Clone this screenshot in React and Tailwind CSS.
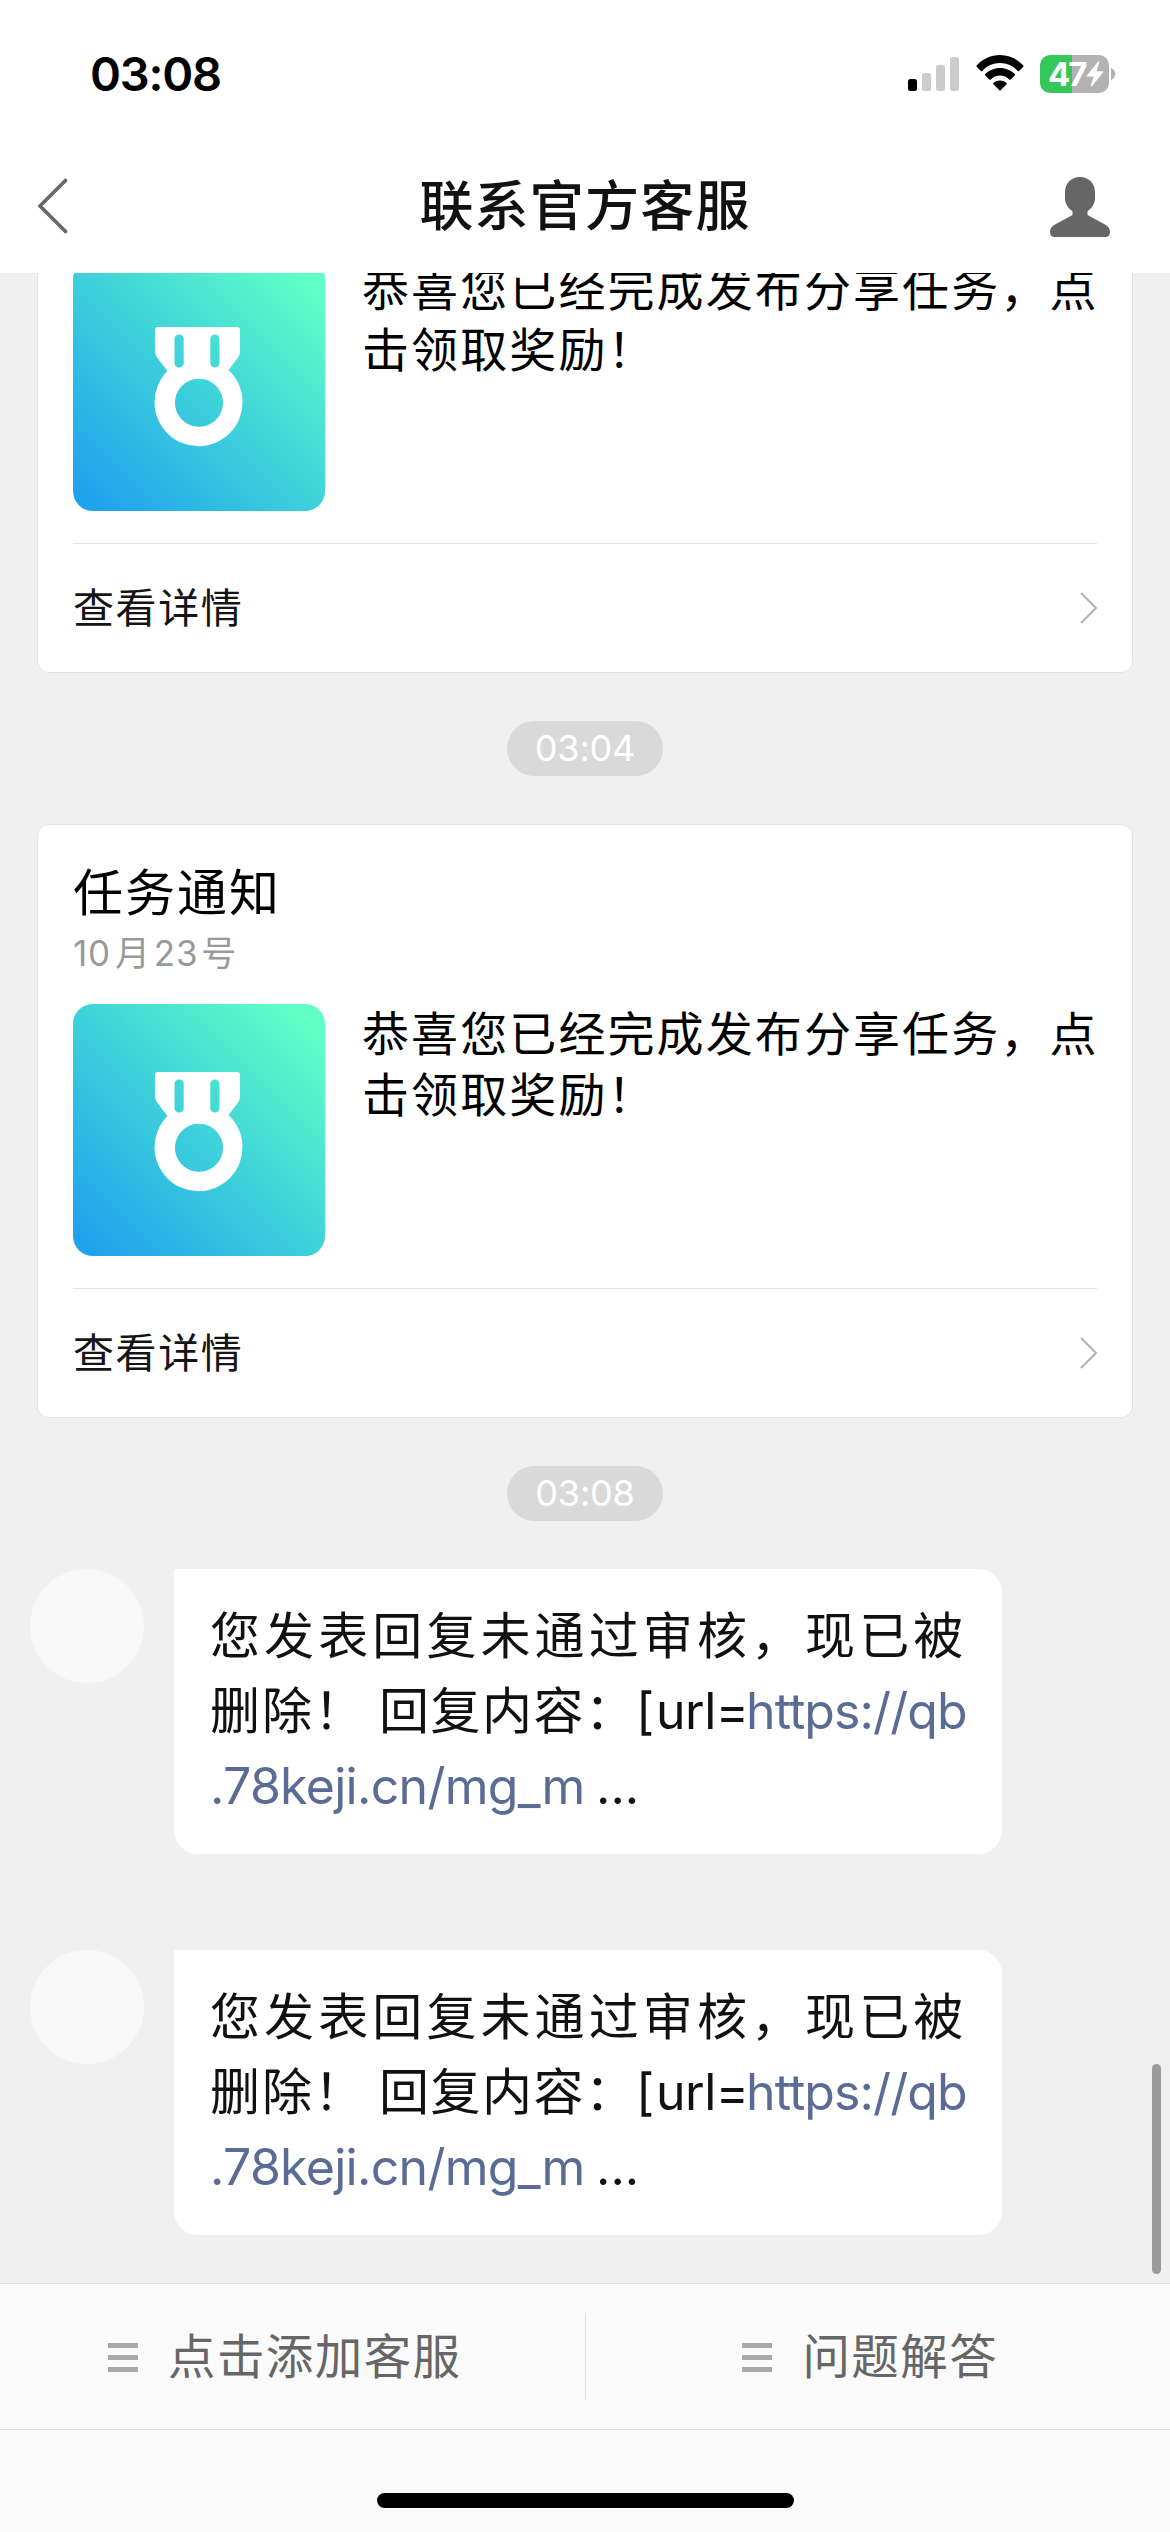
function StatusBar() {
  return (
    <div className="flex h-[147px] shrink-0 items-start bg-white pl-[90px] pr-[54px] pt-[50px]">
      <div className="h-[48px] w-[134px] whitespace-nowrap text-[47px] font-semibold leading-[48px] tracking-[-1.200px] text-black">03:08</div>
      <div className="ml-auto flex items-start pt-[5px]">
        <svg width="52" height="36" viewBox="0 0 52 36">
          <rect x="0" y="24" width="9" height="12" rx="2.5" fill="#000" />
          <rect x="14" y="18" width="9" height="18" rx="2.5" fill="#ccc" />
          <rect x="28" y="10" width="9" height="26" rx="2.5" fill="#ccc" />
          <rect x="42" y="2" width="9" height="34" rx="2.5" fill="#ccc" />
        </svg>
        <svg className="ml-[16px]" width="48" height="36" viewBox="0 0 48 36">
          <path d="M0.7 10.4C6.8 3.9 15 0 24 0s17.2 3.9 23.3 10.4a.9.9 0 0 1 0 1.3l-4.2 4.2a.9.9 0 0 1-1.3 0C37.200 11 31 8 24 8S10.800 11 6.200 15.900a.9.9 0 0 1-1.3 0L.7 11.700a.9.9 0 0 1 0-1.300z" />
          <path d="M9.200 19.100C13 15.200 18.200 12.900 24 12.900s11 2.300 14.800 6.200a.9.9 0 0 1 0 1.300l-4.200 4a.9.9 0 0 1-1.300 0C30.900 22.100 27.700 20.500 24 20.500s-6.900 1.600-9.300 3.900a.9.9 0 0 1-1.300 0l-4.200-4a.9.9 0 0 1 0-1.300z" />
          <path d="M17.400 27.900C19.200 26.400 21.500 25.500 24 25.500s4.800.9 6.600 2.400a.9.9 0 0 1 0 1.300l-6 6.100a.9.9 0 0 1-1.200 0l-6-6.100a.9.9 0 0 1 0-1.300z" />
        </svg>
        <div className="ml-[16px] flex h-[38px] w-[69px] items-center rounded-[10px] bg-[linear-gradient(to_right,#35c759_32px,#b2b2b2_32px)] pl-[8px]">
          <span className="w-[37px] whitespace-nowrap text-[33px] font-bold leading-[38px] tracking-[-2px] text-white">47</span>
          <svg className="ml-[1px]" width="18" height="26" viewBox="0 0 18 26">
            <path d="M12 .8 1 14.200c-.5.700-.3 1.300.500 1.300h6.200L4.800 24.400c-.2.900.7 1.200 1.300.500L17 11.600c.5-.7.300-1.300-.5-1.300h-6L13.300 1.300C13.500.300 12.600 0 12 .8z" fill="#fff" />
          </svg>
        </div>
        <svg className="ml-[2px] mt-[13px]" width="5" height="12" viewBox="0 0 5 12">
          <path d="M0 0c2.500.8 4.300 3.200 4.300 6S2.500 11.200 0 12z" fill="#b2b2b2" />
        </svg>
      </div>
    </div>
  );
}

function NavBar() {
  return (
    <div className="grid h-[126px] shrink-0 grid-cols-[200px_1fr_200px] bg-white">
      <svg className="ml-[36px] mt-[31px]" width="34" height="56" viewBox="0 0 34 56" fill="none" stroke="#666" strokeWidth="3.6">
        <path d="M29.500 2.500 4 28l25.500 25.500" strokeLinecap="round" />
      </svg>
      <h1 className="mt-[23px] whitespace-nowrap text-center text-[54px] font-medium leading-[74px] tracking-[1.200px] text-[#111]">联系官方客服</h1>
      <svg className="ml-[80px] mt-[30px]" width="60" height="60" viewBox="0 0 60 60" fill="#666">
        <path d="M30 0c8.800 0 15 6.500 15 15v6c0 6-3.300 10.500-7.500 13.200V38L55 47.500c3.500 2 5 4.500 5 7.500 0 3-2 5-5 5H5c-3 0-5-2-5-5 0-3 1.500-5.500 5-7.500L22.500 38v-3.800C18.300 31.500 15 27 15 21v-6C15 6.500 21.200 0 30 0z" />
      </svg>
    </div>
  );
}

function MedalTile() {
  return (
    <div className="size-[252px] shrink-0 overflow-hidden rounded-[20px] bg-[linear-gradient(45deg,#1fa2ed_5%,#3ed2da_50%,#60ffc6_92%)]">
      <svg width="252" height="252" viewBox="0 0 252 252" fill="#fff" fillRule="evenodd">
        <path d="M85 68H164a3 3 0 0 1 3 3V92q0 3-1.500 6L155.500 111A44 44 0 1 1 94.500 112L84 98.500Q82 95 82 92V71a3 3 0 0 1 3-3zM101.500 80V104a4.600 4.600 0 0 0 9.200 0V80a4.600 4.600 0 0 0-9.200 0zM137.300 80V104a4.600 4.600 0 0 0 9.200 0V80a4.600 4.600 0 0 0-9.200 0zM126 119.700a24 24 0 1 0 .01 0z" />
      </svg>
    </div>
  );
}

function CardHeader() {
  return (
    <header className="mb-[26px]">
      <h2 className="h-[70px] whitespace-nowrap text-[50px] leading-[70px] tracking-[2px] text-black">任务通知</h2>
      <p className="h-[50px] whitespace-nowrap text-[35px] leading-[50px] tracking-[0.800px] text-[#999]">
        10<span className="ml-[4px] mr-[3px]">月</span>23<span className="ml-[3px]">号</span>
      </p>
    </header>
  );
}

function TaskCard({ header }) {
  return (
    <article className="mx-[37px] flex h-[594px] shrink-0 flex-col justify-end rounded-[12px] border border-[#e3e3e3] bg-white px-[35px]">
      {header && <CardHeader />}
      <div className="flex">
        <MedalTile />
        <p className="-mt-px ml-[37px] whitespace-nowrap text-[47px] leading-[61px] tracking-[2.100px] text-black">
          恭喜您已经完成发布分享任务，点
          <br />
          击领取奖励！
        </p>
      </div>
      <div className="mt-[32px] flex h-[129px] items-center justify-between border-t border-[#e3e3e3]">
        <span className="whitespace-nowrap text-[41px] leading-[60px] tracking-[1.600px] text-[#151515]">查看详情</span>
        <svg width="17" height="32" viewBox="0 0 17 32" fill="none" stroke="#b2b2b2" strokeWidth="2">
          <path d="m1 1 15 15L1 31" />
        </svg>
      </div>
    </article>
  );
}

function TimePill({ time }) {
  return (
    <div className="my-[48px] flex h-[55px] shrink-0 justify-center">
      <time className="w-[156px] rounded-full bg-[#d9d9d9] text-center text-[36px] leading-[55px] tracking-[-0.200px] text-white">{time}</time>
    </div>
  );
}

function Message() {
  return (
    <div className="flex h-[285px] shrink-0 pl-[30px]">
      <div className="size-[114px] shrink-0 rounded-full bg-[#f8f8f8]" />
      <div className="ml-[30px] w-[828px] rounded-[24px] rounded-tl-none bg-white pl-[36px] pt-[30px] text-[50px] leading-[75px] text-[#111]">
        <p className="h-[75px] whitespace-nowrap tracking-[4.100px]">您发表回复未通过审核，现已被</p>
        <p className="flex h-[75px] whitespace-nowrap">
          <span className="w-[169px] tracking-[2px]">删除！</span>
          <span className="w-[257px] tracking-[1.500px]">回复内容：</span>
          <span className="w-[20px]">[</span>
          <span className="w-[90px] tracking-[-0.500px]">url=</span>
          <span className="tracking-[-0.900px] text-[#5a6b95]">https://qb</span>
        </p>
        <p className="flex h-[75px] whitespace-nowrap">
          <span className="w-[386px] tracking-[-0.700px] text-[#5a6b95]">.78keji.cn/mg_m</span>
          <span>...</span>
        </p>
      </div>
    </div>
  );
}

function MenuButton({ label }) {
  return (
    <button className="flex flex-1 items-center justify-center pr-[15px] pt-[1px]">
      <span className="flex flex-col gap-[7px]">
        <span className="h-[5px] w-[30px] bg-[#aaa]" />
        <span className="h-[5px] w-[30px] bg-[#aaa]" />
        <span className="h-[5px] w-[30px] bg-[#aaa]" />
      </span>
      <span className="ml-[30px] whitespace-nowrap text-[47.500px] leading-[70px] tracking-[1.400px] text-[#666]">{label}</span>
    </button>
  );
}

export default function App() {
  return (
    <div className="relative flex h-[2532px] w-[1170px] flex-col overflow-hidden bg-[#f0f0f0] font-['Inter','Noto_Sans_CJK_SC',sans-serif]">
      <StatusBar />
      <NavBar />
      <main className="flex h-[2010px] shrink-0 flex-col justify-end overflow-hidden pb-[48px]">
        <TaskCard />
        <TimePill time="03:04" />
        <TaskCard header />
        <TimePill time="03:08" />
        <Message />
        <div className="h-[96px] shrink-0" />
        <Message />
      </main>
      <footer className="flex grow flex-col bg-[#fafafa]">
        <div className="flex h-[147px] items-center border-y border-[#dedede]">
          <MenuButton label="点击添加客服" />
          <div className="h-[87px] w-px bg-[#dedede]" />
          <MenuButton label="问题解答" />
        </div>
        <div className="mx-auto mt-[63px] h-[15px] w-[417px] rounded-full bg-black" />
      </footer>
      <div className="absolute right-[9px] top-[2064px] h-[210px] w-[9px] rounded-full bg-[#9a9a9a]" />
    </div>
  );
}
